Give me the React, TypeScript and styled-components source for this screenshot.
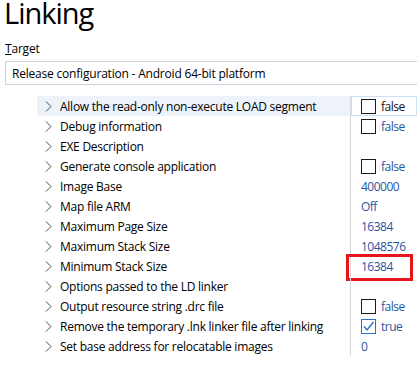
import styled, { createGlobalStyle } from "styled-components";

const GlobalStyle = createGlobalStyle`
  body {
    margin: 0;
    background: #ffffff;
    font-family: "Open Sans", "Noto Sans", sans-serif;
    color: #000000;
  }
`;

type Valor =
  | { tipo: "check"; marcado: boolean }
  | { tipo: "texto"; texto: string }
  | { tipo: "vazio" };

interface Propriedade {
  nome: string;
  valor: Valor;
  destaque?: boolean;
}

const Propriedades: Propriedade[] = [
  { nome: "Allow the read-only non-execute LOAD segment", valor: { tipo: "check", marcado: false }, destaque: true },
  { nome: "Debug information", valor: { tipo: "check", marcado: false } },
  { nome: "EXE Description", valor: { tipo: "vazio" } },
  { nome: "Generate console application", valor: { tipo: "check", marcado: false } },
  { nome: "Image Base", valor: { tipo: "texto", texto: "400000" } },
  { nome: "Map file ARM", valor: { tipo: "texto", texto: "Off" } },
  { nome: "Maximum Page Size", valor: { tipo: "texto", texto: "16384" } },
  { nome: "Maximum Stack Size", valor: { tipo: "texto", texto: "1048576" } },
  { nome: "Minimum Stack Size", valor: { tipo: "texto", texto: "16384" } },
  { nome: "Options passed to the LD linker", valor: { tipo: "vazio" } },
  { nome: "Output resource string .drc file", valor: { tipo: "check", marcado: false } },
  { nome: "Remove the temporary .lnk linker file after linking", valor: { tipo: "check", marcado: true } },
  { nome: "Set base address for relocatable images", valor: { tipo: "texto", texto: "0" } },
];

function Seta() {
  return (
    <svg width="7" height="11" viewBox="0 0 7 11">
      <path d="M1 0.5 L6 5.5 L1 10.5" fill="none" stroke="#4a4a4a" strokeWidth="1" />
    </svg>
  );
}

function Marca() {
  return (
    <svg width="13" height="13" viewBox="0 0 13 13">
      <path d="M2 6.5 L5 10 L11.5 2" fill="none" stroke="#2a6fc9" strokeWidth="1.4" />
    </svg>
  );
}

function CelulaValor({ valor, destaque }: { valor: Valor; destaque?: boolean }) {
  if (valor.tipo === "check") {
    return (
      <>
        <CaixaCheck $marcado={valor.marcado}>{valor.marcado && <Marca />}</CaixaCheck>
        <TextoValor $escuro={destaque} $afastado>{valor.marcado ? "true" : "false"}</TextoValor>
      </>
    );
  }
  if (valor.tipo === "texto") {
    return <TextoValor>{valor.texto}</TextoValor>;
  }
  return null;
}

export default function App() {
  return (
    <Pagina>
      <GlobalStyle />
      <Titulo>Linking</Titulo>
      <Rotulo>
        <u>T</u>arget
      </Rotulo>
      <CaixaAlvo>Release configuration - Android 64-bit platform</CaixaAlvo>
      <Grade>
        {Propriedades.map((p) => (
          <Linha key={p.nome}>
            <CelulaNome $destaque={p.destaque}>
              <Seta />
              <span>{p.nome}</span>
            </CelulaNome>
            <CelulaDireita $destaque={p.destaque}>
              <CelulaValor valor={p.valor} destaque={p.destaque} />
              {p.nome === "Minimum Stack Size" && <Marcador />}
            </CelulaDireita>
          </Linha>
        ))}
      </Grade>
    </Pagina>
  );
}

const Pagina = styled.div`
  width: 417px;
  height: 367px;
  overflow: hidden;
  position: relative;
`;

const Titulo = styled.h1`
  margin: 0;
  padding: 0 0 0 4px;
  font-family: "Open Sans", sans-serif;
  font-weight: 400;
  font-size: 29px;
  letter-spacing: -1px;
  line-height: 26px;
  height: 26px;
`;

const Rotulo = styled.div`
  padding-left: 5px;
  margin-top: 15px;
  font-size: 12px;
  letter-spacing: -0.2px;
  line-height: 16px;
  height: 16px;
`;

const CaixaAlvo = styled.div`
  margin: 4px 0 0 5px;
  height: 22px;
  border: 1px solid #cdd3d9;
  border-right: none;
  display: flex;
  align-items: center;
  padding-left: 6px;
  font-size: 12px;
  letter-spacing: -0.2px;
`;

const Grade = styled.div`
  margin: 11px 0 0 37px;
  display: flex;
  flex-direction: column;
`;

const Linha = styled.div`
  display: grid;
  grid-template-columns: 313px 1fr;
  height: 20px;
`;

const CelulaNome = styled.div<{ $destaque?: boolean }>`
  display: flex;
  align-items: center;
  gap: 8px;
  padding-left: 8px;
  font-size: 12px;
  letter-spacing: -0.25px;
  background: ${(p) => (p.$destaque ? "#eef3fa" : "transparent")};
  white-space: nowrap;
`;

const CelulaDireita = styled.div<{ $destaque?: boolean }>`
  position: relative;
  display: flex;
  align-items: center;
  padding-left: 10px;
  border-left: 1px solid #d8d8d8;
  box-shadow: ${(p) => (p.$destaque ? "inset 0 0 0 1px #cfe0f2" : "none")};
  font-size: 12px;
`;

const CaixaCheck = styled.div<{ $marcado: boolean }>`
  width: 13px;
  height: 13px;
  border: 1px solid ${(p) => (p.$marcado ? "#2a6fc9" : "#1a1a1a")};
  background: #ffffff;
  display: flex;
  align-items: center;
  justify-content: center;
`;

const TextoValor = styled.span<{ $escuro?: boolean; $afastado?: boolean }>`
  color: ${(p) => (p.$escuro ? "#111111" : "#2b55a0")};
  margin-left: ${(p) => (p.$afastado ? "5px" : "0")};
  letter-spacing: -0.5px;
`;

const Marcador = styled.div`
  position: absolute;
  left: -5px;
  top: -2px;
  width: 61px;
  height: 21px;
  border: 3px solid #e8141c;
`;
